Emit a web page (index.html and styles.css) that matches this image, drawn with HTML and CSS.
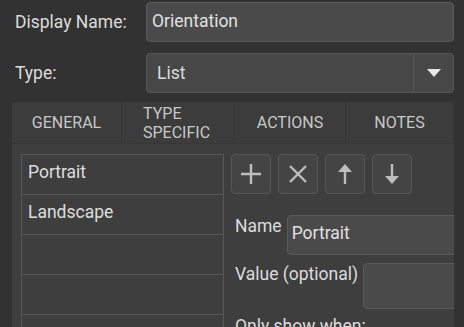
FILE: index.html
```html
<!DOCTYPE html>
<html>
<head>
<meta charset="utf-8">
<link rel="stylesheet" href="styles.css">
</head>
<body>
<div class="form">
  <div class="row">
    <label class="lbl">Display Name:</label>
    <div class="input">Orientation</div>
  </div>
  <div class="row row2">
    <label class="lbl">Type:</label>
    <div class="select">
      <span class="sel-text">List</span>
      <span class="sel-btn"><svg width="14" height="9" viewBox="0 0 14 9"><polygon points="0,0 14,0 7,8" fill="#e6e6e6"/></svg></span>
    </div>
  </div>
  <div class="panel">
    <div class="tabs">
      <div class="tab">GENERAL</div>
      <div class="tab tab-two">TYPE<br>SPECIFIC</div>
      <div class="tab">ACTIONS</div>
      <div class="tab">NOTES</div>
    </div>
    <div class="body">
      <div class="list">
        <div class="item">Portrait</div>
        <div class="item">Landscape</div>
        <div class="item"></div>
        <div class="item"></div>
        <div class="item"></div>
      </div>
      <div class="detail">
        <div class="btns">
          <div class="btn"><svg width="22" height="22" viewBox="0 0 22 22"><path d="M11 1v20M1 11h20" stroke="#bdbdbd" stroke-width="2.4"/></svg></div>
          <div class="btn"><svg width="20" height="20" viewBox="0 0 20 20"><path d="M2 2L18 18M18 2L2 18" stroke="#bdbdbd" stroke-width="2.4"/></svg></div>
          <div class="btn"><svg width="14" height="20" viewBox="0 0 14 20"><path d="M7 6v14" stroke="#bdbdbd" stroke-width="2.4"/><polygon points="0,8 14,8 7,0" fill="#bdbdbd"/></svg></div>
          <div class="btn"><svg width="14" height="20" viewBox="0 0 14 20"><path d="M7 0v14" stroke="#bdbdbd" stroke-width="2.4"/><polygon points="0,12 14,12 7,20" fill="#bdbdbd"/></svg></div>
        </div>
        <div class="field name-row">
          <span class="flbl">Name</span>
          <div class="input finput">Portrait</div>
        </div>
        <div class="field value-row">
          <span class="flbl">Value (optional)</span>
          <div class="input finput tall"></div>
        </div>
        <div class="field only">Only show when:</div>
      </div>
    </div>
  </div>
</div>
</body>
</html>
```
FILE: styles.css
```css
html, body {
  margin: 0;
  padding: 0;
  background: #323232;
  height: 100%;
  overflow: hidden;
}
body {
  font-family: Roboto, "Noto Sans", sans-serif;
  color: #dcdcdc;
  font-size: 17.5px;
}
.form {
  padding-top: 2px;
}
.row {
  display: flex;
  align-items: center;
  height: 40px;
}
.row2 {
  margin-top: 11px;
}
.lbl {
  width: 131px;
  padding-left: 15px;
  flex: none;
}
.input {
  box-sizing: border-box;
  height: 40px;
  background: #4a4a4a;
  border: 1px solid #5a5a5a;
  border-radius: 4px;
  display: flex;
  align-items: center;
  padding-left: 5px;
  color: #e0e0e0;
}
.row .input {
  width: 308px;
  align-items: flex-start;
  padding-top: 8px;
}
.select {
  box-sizing: border-box;
  width: 308px;
  height: 40px;
  background: #474747;
  border: 1px solid #575757;
  border-radius: 4px;
  display: flex;
}
.sel-text {
  flex: 1;
  padding-left: 10px;
  display: flex;
  align-items: center;
}
.sel-btn {
  width: 39px;
  border-left: 1px solid #575757;
  display: flex;
  align-items: center;
  justify-content: center;
}
.panel {
  margin-top: 9px;
  margin-left: 12px;
  width: 442px;
  height: 240px;
  background: #3e3e3e;
  overflow: hidden;
}
.tabs {
  display: grid;
  grid-template-columns: 110px 113px 111px 108px;
  height: 41px;
  border-bottom: 1px solid #363636;
}
.tab {
  display: flex;
  align-items: center;
  justify-content: center;
  font-size: 16px;
  color: #c8c8c8;
  background: #3c3c3c;
  border-right: 1px solid #363636;
}
.tab-two {
  justify-content: flex-start;
  padding-left: 21px;
  line-height: 19px;
}
.body {
  display: flex;
  padding: 10px 0 0 9px;
  gap: 7px;
}
.list {
  width: 203px;
  flex: none;
  border: 1px solid #585858;
  box-sizing: border-box;
}
.item {
  height: 40px;
  border-bottom: 1px solid #585858;
  padding-left: 6px;
  padding-top: 7px;
  box-sizing: border-box;
  color: #dedede;
}
.detail {
  flex: 1;
  min-width: 0;
}
.btns {
  display: flex;
  gap: 7px;
}
.btn {
  box-sizing: border-box;
  width: 40px;
  height: 40px;
  border: 1px solid #575757;
  border-radius: 4px;
  background: #444;
  display: flex;
  align-items: center;
  justify-content: center;
}
.field {
  display: flex;
  align-items: flex-start;
  padding-left: 4px;
}
.name-row {
  margin-top: 21px;
}
.flbl {
  padding-top: 1px;
  margin-right: 5px;
  white-space: nowrap;
}
.finput {
  width: 300px;
  flex: none;
  padding-top: 0;
  padding-bottom: 4px;
  padding-left: 4px;
}
.value-row {
  margin-top: 8px;
}
.tall {
  height: 46px;
  width: 200px;
}
.only {
  margin-top: 7px;
}
```
